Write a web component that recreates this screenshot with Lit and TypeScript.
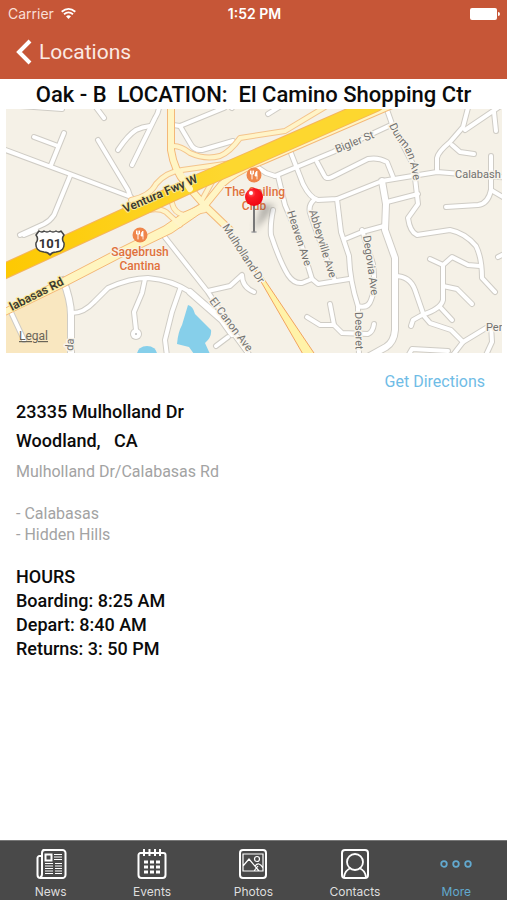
import { LitElement, html, svg, css } from "lit";
import { customElement } from "lit/decorators.js";
import { classMap } from "lit/directives/class-map.js";

const minorRoads = [
  "M0 148L70 174L131 197", "M34 137L58 146", "M64 133L51 165", "M98 140L128 190L132 202",
  "M70 176L54 215Q50 221 44 224L20 235", "M95 106L104 118", "M20 106L62 109",
  "M118 150Q128 135 136 130Q142 127 150 126", "M159 106Q159 112 155 118L132 165",
  "M173 125L180 126L224 108", "M180 126L190 143Q194 151 202 150L233 141",
  "M268 114L284 104", "M385 104L392 124L415 168", "M275 176L333 152L391 125", "M257 167L266 173L275 176",
  "M289 148L303 184Q310 198 318 200L337 199L382 181L437 172L510 178",
  "M317 162L324 175Q326 180 332 177L368 159Q378 157 387 162L393 177",
  "M437 170V158Q438 152 450 142L463 127L469 104", "M465 130L499 107", "M494 112L496 131",
  "M452 145L460 152L474 154", "M491 156V190Q488 204 478 205L446 207", "M491 190L508 200",
  "M278 176L285 205L300 240L312 279",
  "M273 210Q270 225 271 235Q280 262 288 275Q294 284 302 283L312 279L318 284L349 279",
  "M314 200Q307 206 311 216L325 255L335 281",
  "M337 199L341 232L349 256Q350 282 358 306Q368 309 371 300Q376 288 373 264L362 230",
  "M345 239L362 232L384 226", "M387 202L418 194",
  "M415 178L418 204L408 218Q410 232 417 235L450 230Q465 233 476 246Q482 258 482 278L495 292",
  "M395 276Q410 276 415 290L424 316L430 323L451 330L463 342L453 355", "M463 342L491 325L492 342L486 355",
  "M430 259L443 265V300Q441 309 422 315L413 320L411 326", "M443 265L452 257L468 265L480 266",
  "M443 286L457 289L472 304", "M440 307L452 320", "M408 356L412 349L448 351",
  "M307 317L320 325H334", "M330 304L334 325L342 333L368 334Q373 332 374 324", "M358 308L359 356",
  "M72 313Q84 313 94 302L108 288Q130 278 148 278Q172 280 190 292L222 318L250 356",
  "M145 279L142 293L134 312L136 330", "M180 289L172 312L165 340L167 356",
  "M164 236L208 292L250 356", "M208 291L230 286L242 275Q242 287 254 292",
  "M216 346L228 337", "M24 235L36 230", "M10 310L24 340", "M498 257L504 254", "M232 108L236 100",
];
const wideRoads = ["M382 181L386 204L385 230L395 258V330Q394 342 386 347L366 358", "M63 280Q71 300 71 315V356", "M190 292L222 320L232 334"];
const ramps = [
  "M172 146Q180 145 190 153Q205 160 220 156Q230 152 240 138L285 131L330 104",
  "M131 200Q150 196 156 184Q166 172 182 170L253 160",
  "M130 216Q155 205 166 212L180 225", "M172 203Q174 213 184 215L205 210", "M202 200L213 180L232 168",
];
const arterials = ["M171 104V150Q174 170 186 184L206 207L230 230", "M180 220L205 205L222 184Q234 172 262 161L392 105"];

const mapLabel = (x: number, y: number, angle: number, text: string, kind = "") =>
  svg`<text class="street ${kind}" transform="translate(${x} ${y}) rotate(${angle})">${text}</text>`;

const foodPin = (x: number, y: number) => svg`
  <g transform="translate(${x} ${y})">
    <circle r="7.5" fill="#ef854a" />
    <path d="M-3.500-4v3h3v-3M-2-4v8" fill="none" stroke="#fff" stroke-width="1" />
    <path d="M3 4V-4Q1-3 1 1H3" fill="#fff" stroke="#fff" stroke-width=".8" />
  </g>`;

@customElement("location-map")
class LocationMap extends LitElement {
  static styles = css`
    :host { display: block; }
    svg { display: block; width: 100%; height: auto; font-family: Roboto, "Liberation Sans", sans-serif; }
    path { stroke-linejoin: round; stroke-linecap: round; }
    .line { fill: none; }
    .street { font-size: 11px; fill: #71716f; stroke: #f7f3ea; stroke-width: 3px; paint-order: stroke; stroke-linejoin: round; }
    .major { font-size: 12px; fill: #3c3a31; font-weight: 600; stroke: #fbe997; stroke-width: 2px; }
    .place { font-size: 12px; font-weight: 500; fill: #e0713c; stroke: #f7f3ea; stroke-width: 2px; paint-order: stroke; text-anchor: middle; }
    .shield { font-size: 13px; font-weight: 700; fill: #333; text-anchor: middle; }
    .legal { font-size: 12px; fill: #6a6558; text-decoration: underline; }
  `;

  private roads(paths: string[], color: string, width: number) {
    return paths.map((d) => svg`<path class="line" d=${d} stroke=${color} stroke-width=${width} />`);
  }

  render() {
    return html`<svg viewBox="6 109 496 244" role="img" aria-label="Map of El Camino Shopping Center">
      <defs>
        <linearGradient id="fwy" x1="0" x2="1"><stop offset="0" stop-color="#fdc800" /><stop offset=".6" stop-color="#fdd72f" /></linearGradient>
        <radialGradient id="ball" cx=".35" cy=".3" r=".7"><stop offset="0" stop-color="#ff7070" /><stop offset=".35" stop-color="#fb1a23" /><stop offset="1" stop-color="#f00613" /></radialGradient>
        <filter id="soft" x="-50%" y="-50%" width="200%" height="200%"><feGaussianBlur stdDeviation="3" /></filter>
      </defs>
      <rect x="6" y="109" width="496" height="244" fill="#f5f1e7" />
      <path d="M6 311L62 283Q71 300 71 315V353H6Z" fill="#f9e7c0" />
      <path d="M188 305Q193 306 195 314L211 330Q212 337 205 343L210 354H194L189 347L177 344Q178 332 182 325Z" fill="#86cfea" />
      <ellipse cx="147" cy="354" rx="10" ry="8" fill="#86cfea" />
      ${this.roads(minorRoads, "#cfccc5", 6)}${this.roads(wideRoads, "#cfccc5", 8)}
      <circle cx="136" cy="334" r="6" fill="#cfccc5" />
      ${this.roads(minorRoads, "#fff", 4)}${this.roads(wideRoads, "#fff", 6)}
      <circle cx="136" cy="334" r="5" fill="#fff" /><circle cx="136" cy="334" r="1" fill="#bbb" />
      ${this.roads(ramps, "#f4c48c", 6)}${this.roads(arterials, "#f4b878", 8)}
      <path d="M-2 312L60 279L110 253L164 226L184 212L200 205L204 211L172 233L120 258L64 287L-2 319Z" fill="#fff5bf" stroke="#f4b878" />
      <path d="M252 266L304 356H316L262 276Z" fill="#fff2a8" stroke="#f2a35f" />
      ${this.roads(ramps, "#fff4c8", 4)}${this.roads(arterials, "#fff5c4", 6)}
      <path class="line" d="M-4 275L83 235L131 213L200 181L253 158L376 104" stroke="#f5b55c" stroke-width="16" />
      <path class="line" d="M-4 275L83 235L131 213L200 181L253 158L376 104" stroke="url(#fwy)" stroke-width="14" />
      <path class="line" d="M179 172L190 189" stroke="#fff5c4" stroke-width="6" />

      <path id="dunman" class="line" d="M389 125Q395 139 403 147Q411 158 414 186" />
      <text class="street"><textPath href="#dunman">Dunman Ave</textPath></text>
      ${mapLabel(337, 153, -22, "Bigler St")}
      ${mapLabel(455, 178, 0, "Calabash")}
      ${mapLabel(287, 212, 72, "Heaven Ave")}
      ${mapLabel(309, 211, 73, "Abbeyville Ave")}
      ${mapLabel(363, 236, 82, "Degovia Ave")}
      ${mapLabel(355, 312, 89, "Deseret")}
      ${mapLabel(222, 227, 57, "Mulholland Dr")}
      ${mapLabel(209, 301, 53, "El Canon Ave")}
      ${mapLabel(486, 331, 0, "Per")}
      ${mapLabel(73, 351, -86, "da")}
      ${mapLabel(125, 213, -23, "Ventura Fwy W", "major")}
      ${mapLabel(12, 311, -27, "labasas Rd", "major")}

      <path d="M39 231q3 2 5 0q3 2 6 0q3 2 6 0q3 2 5 0l3 4q-3 4 0 8q1 8-8 9q-4 0-6 3q-2-3-6-3q-9-1-8-9q3-4 0-8Z" fill="#fff" stroke="#444" stroke-width="1.5" />
      <text class="shield" x="50" y="248">101</text>
      <text class="legal" x="19" y="340">Legal</text>
      ${foodPin(140, 235)}
      <text class="place" x="140" y="256">Sagebrush</text>
      <text class="place" x="140" y="270">Cantina</text>
      ${foodPin(254, 175)}
      <text class="place" x="255" y="196">The Ceiling</text>
      <text class="place" x="254" y="210">Club</text>
      <path d="M254 231L262 204L275 205L267 217Z" fill="#555" opacity=".4" filter="url(#soft)" />
      <ellipse cx="254" cy="232" rx="3" ry="1" fill="#aaa" />
      <path d="M254 204V231" stroke="#777" stroke-width="2" />
      <circle cx="254" cy="197" r="9" fill="url(#ball)" />
      <circle cx="251" cy="193" r="2" fill="#fff" />
    </svg>`;
  }
}

const tabs = [
  { name: "News", icon: svg`<path d="M6.5 1h20a3 3 0 0 1 3 3v22a3 3 0 0 1-3 3h-22A3 3 0 0 1 1.500 26V9a2 2 0 0 1 2-2h2M6 4v21q0 3-2 3M6 4q0-3 3-3" stroke-width="2"/><path d="M9.500 5.500h6v6h-6z" stroke-width="2"/><path d="M18 5.500h8M18 8h8M18 10.500h8M9 14.500h8M9 17h8M9 19.500h8M9 22h8M9 24.500h8M19 14.500h7M19 17h7M19 19.500h7M19 22h7M19 24.500h7" stroke-width="1"/>` },
  { name: "Events", icon: svg`<path d="M3.500 4h23a2 2 0 0 1 2 2v20a3 3 0 0 1-3 3h-21a3 3 0 0 1-3-3V6a2 2 0 0 1 2-2ZM7 0v7M12.500 0v7M18 0v7M23 0v7" stroke-width="2"/><path d="M7 13h16M7 18h16M7 23h16" stroke-width="3" stroke-dasharray="4 2"/>` },
  { name: "Photos", icon: svg`<rect x="2" y="1" width="26" height="28" rx="3" stroke-width="2"/><path d="M5 5h20v17H5zM5 17l6-7 10 12M17 17q4-5 8 2M16 22l4-5" stroke-width="1.200"/><circle cx="19" cy="10" r="2.500" stroke-width="1.200"/>` },
  { name: "Contacts", icon: svg`<rect x="2" y="1" width="26" height="28" rx="3" stroke-width="2"/><circle cx="15" cy="13" r="8" stroke-width="1.800"/><path d="M4 28q1-7 7-9M26 28q-1-7-7-9" stroke-width="1.800"/>` },
  { name: "More", icon: svg`<circle cx="3" cy="15" r="2.800" stroke-width="1.800"/><circle cx="15" cy="15" r="2.800" stroke-width="1.800"/><circle cx="27" cy="15" r="2.800" stroke-width="1.800"/>` },
];

@customElement("app-root")
class AppRoot extends LitElement {
  static styles = css`
    :host { display: flex; flex-direction: column; min-height: 100vh; background: #fff; color: #0b0b0b; font-family: Roboto, "Liberation Sans", sans-serif; }
    header { background: #c65637; color: #fff; padding-bottom: 4px; }
    .status { display: grid; grid-template-columns: 1fr auto 1fr; align-items: center; height: 27px; padding: 0 6px 0 8px; font: 14px/20px Inter, "Liberation Sans", sans-serif; }
    .carrier { display: flex; align-items: center; gap: 7px; color: #f9dfd6; }
    .clock { font-weight: 600; }
    .battery { justify-self: end; }
    .back { display: flex; align-items: center; gap: 7px; height: 48px; padding: 2px 0 0 16px; border: 0; background: none; color: #fbe9e3; font: 21px/28px Roboto, "Liberation Sans", sans-serif; cursor: pointer; }
    svg { display: block; overflow: visible; }
    main { flex: 1; }
    h1 { margin: 0; padding-top: 2px; font-size: 22px; line-height: 28px; font-weight: 500; text-align: center; white-space: pre; }
    location-map { margin: 0 5px 0 6px; }
    .details { padding: 18px 22px 16px 16px; font-size: 16px; }
    .directions { display: block; width: fit-content; margin-left: auto; color: #6fbce6; line-height: 22px; text-decoration: none; }
    address { margin-top: 4px; font-style: normal; font-size: 18px; font-weight: 500; line-height: 29px; white-space: pre; }
    .muted { margin: 0; color: #a3a3a3; line-height: 21px; }
    .cross { padding: 6px 0 21px; }
    ul { margin: 0; padding: 0; list-style: none; }
    .hours { margin-top: 20px; font-size: 18px; font-weight: 500; line-height: 24px; }
    h2, p { margin: 0; font: inherit; }
    nav { display: grid; grid-template-columns: repeat(5, 1fr); height: 60px; box-sizing: border-box; border-top: 1px solid #777; background: #494949; }
    .tab { display: flex; flex-direction: column; align-items: center; gap: 5px; padding: 8px 0 0; border: 0; background: none; color: #dedede; font: 12px/16px Inter, "Liberation Sans", sans-serif; cursor: pointer; }
    .tab svg { fill: none; stroke: #fff; }
    .active { color: #62a9cf; }
    .active svg { stroke: #62a9cf; }
  `;

  render() {
    return html`
      <header>
        <div class="status">
          <span class="carrier">Carrier
            <svg width="15" height="11" viewBox="0 0 15 11" fill="none" stroke="#fff" stroke-width="1.800" aria-hidden="true">
              <path d="M.7 3.700Q7.500-2 14.300 3.700M3 6.300Q7.500 2.500 12 6.300" /><path d="M5 8.300Q7.500 6 10 8.300L7.500 11Z" fill="#fff" stroke="none" />
            </svg>
          </span>
          <span class="clock">1:52 PM</span>
          <svg class="battery" width="31" height="12" viewBox="0 0 31 12" fill="#fff" role="img" aria-label="Battery full">
            <rect width="27" height="12" rx="2" /><path d="M28 4q2 0 2 2t-2 2Z" />
          </svg>
        </div>
        <button class="back">
          <svg width="16" height="26" viewBox="0 0 16 26" fill="none" stroke="#fff" stroke-width="4" aria-hidden="true"><path d="M14 2L3 13L14 24" /></svg>
          Locations
        </button>
      </header>
      <main>
        <h1>Oak - B  LOCATION:  El Camino Shopping Ctr</h1>
        <location-map></location-map>
        <section class="details">
          <a class="directions" href="#directions">Get Directions</a>
          <address>23335 Mulholland Dr<br>Woodland,   CA</address>
          <p class="muted cross">Mulholland Dr/Calabasas Rd</p>
          <ul class="muted"><li>- Calabasas</li><li>- Hidden Hills</li></ul>
          <div class="hours">
            <h2>HOURS</h2>
            <p>Boarding: 8:25 AM</p>
            <p>Depart: 8:40 AM</p>
            <p>Returns: 3: 50 PM</p>
          </div>
        </section>
      </main>
      <nav aria-label="Main">
        ${tabs.map(({ name, icon }) => html`
          <button class=${classMap({ tab: true, active: name === "More" })}>
            <svg width="30" height="30" viewBox="0 0 30 30" aria-hidden="true">${icon}</svg>
            ${name}
          </button>`)}
      </nav>`;
  }
}
